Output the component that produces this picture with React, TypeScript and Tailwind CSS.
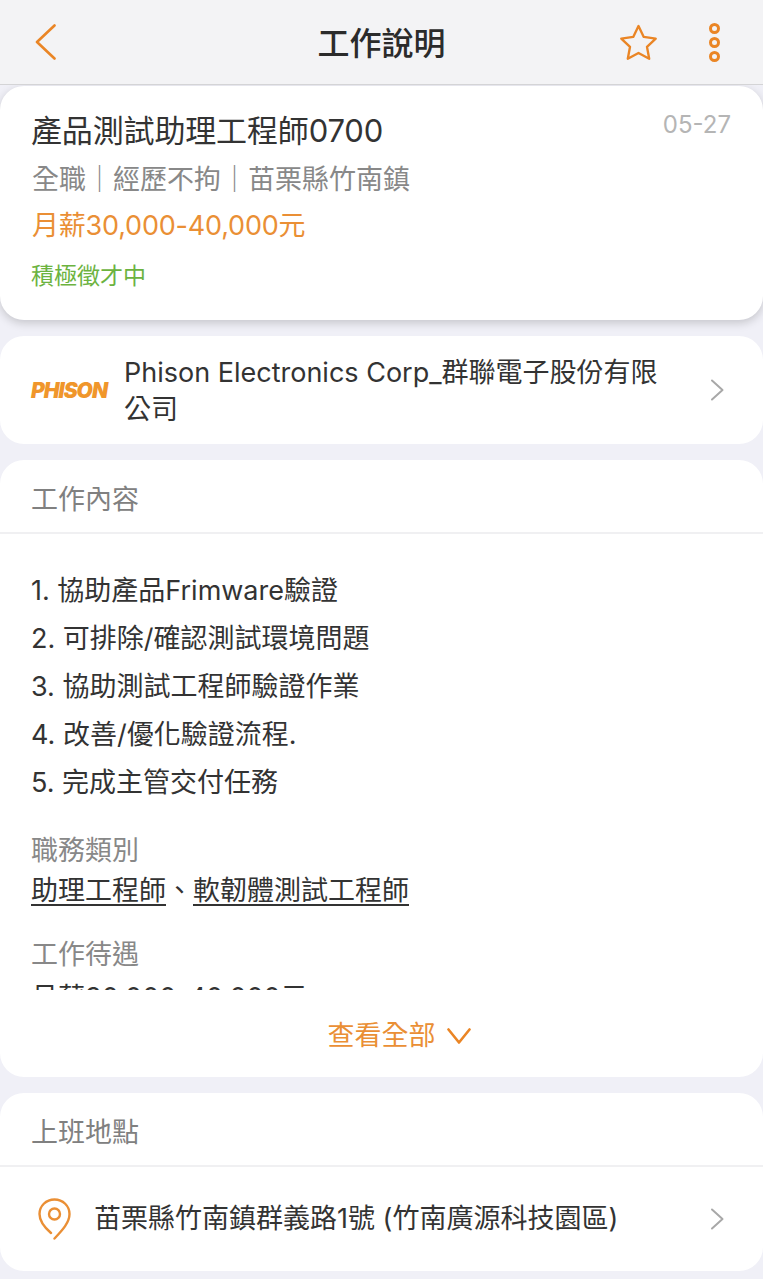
const duties = ['1. 協助產品Frimware驗證', '2. 可排除/確認測試環境問題', '3. 協助測試工程師驗證作業', '4. 改善/優化驗證流程.', '5. 完成主管交付任務']

const font = "font-['Inter','Noto_Sans_CJK_TC',sans-serif]"

function SectionTitle({ children }: { children: string }) {
  return <div className="flex h-[74px] items-center border-b-2 border-[#f0f0f2] px-[31px] pt-[6px] text-[27px] leading-none text-[#808080]">{children}</div>
}

function RowChevron() {
  return (
    <svg viewBox="0 0 14 22" className="h-[22px] w-[14px] shrink-0" fill="none" stroke="#a8a8a8" strokeWidth="2" strokeLinecap="round" strokeLinejoin="round">
      <path d="M2 1.500L12.500 11 2 20.500" />
    </svg>
  )
}

export default function App() {
  return (
    <div className={`${font} h-[1279px] w-[763px] overflow-hidden bg-[#f0f0f7] font-normal text-[#333]`}>
      <header className="relative z-10 flex h-[85px] items-center justify-between border-b border-[#d4d4d6] bg-[#f3f3f5] pl-[35px] pr-[43px]">
        <svg viewBox="0 0 21 36" className="h-[36px] w-[21px]" fill="none" stroke="#ea8525" strokeWidth="2.6" strokeLinecap="round" strokeLinejoin="round">
          <path d="M19.500 1.500L2 18l17.500 16.500" />
        </svg>
        <h1 className="absolute left-0 right-0 top-[28px] text-center text-[32px] font-medium leading-none text-[#2b2b2b]">工作說明</h1>
        <div className="flex items-center gap-[51px]">
          <svg viewBox="0 0 40 38" className="h-[37px] w-[39px]" fill="none" stroke="#ea8525" strokeWidth="2.4" strokeLinejoin="round">
            <path d="M20 2l5.400 11.300 12.300 1.700-9 8.400 2.300 12.300L20 29.800 9 35.700l2.300-12.300-9-8.400 12.300-1.700z" />
          </svg>
          <div className="flex flex-col gap-[3px]">
            <span className="h-[11px] w-[11px] rounded-full border-[3px] border-[#ea8525]" />
            <span className="h-[11px] w-[11px] rounded-full border-[3px] border-[#ea8525]" />
            <span className="h-[11px] w-[11px] rounded-full border-[3px] border-[#ea8525]" />
          </div>
        </div>
      </header>

      <section className="relative mt-px h-[234px] rounded-[24px] bg-white pl-[31px] pr-[32px] pt-[27px] shadow-[0_3px_10px_rgba(0,0,0,0.18)]">
        <div className="flex items-start justify-between">
          <div className="text-[31px] leading-[36px] tracking-[-0.15px] text-[#333]">產品測試助理工程師0700</div>
          <div className="text-[24px] leading-[24px] text-[#b5b5b5]">05-27</div>
        </div>
        <div className="ml-px mt-[15px] text-[27px] leading-[32px] text-[#888]">全職｜經歷不拘｜苗栗縣竹南鎮</div>
        <div className="ml-px mt-[14px] text-[27px] leading-[32px] tracking-[-0.2px] text-[#ea8f35]">月薪30,000-40,000元</div>
        <div className="mt-[20px] text-[23px] leading-[28px] text-[#6cb33f]">積極徵才中</div>
      </section>

      <section className="mt-4 flex h-[108px] items-center rounded-[24px] bg-white pl-[31px] pr-[39px]">
        <div className="w-[78px] shrink-0 text-[21px] font-black italic leading-none tracking-[-1px] text-[#f0962b]">PHISON</div>
        <div className="ml-[15px] w-[540px] pt-[2px] text-[27px] leading-[37px] text-[#333]">Phison Electronics Corp_群聯電子股份有限公司</div>
        <div className="flex-1" />
        <RowChevron />
      </section>

      <section className="mt-4 h-[617px] rounded-[24px] bg-white">
        <SectionTitle>工作內容</SectionTitle>
        <div className="h-[456px] overflow-hidden px-[31px] pt-[33px]">
          {duties.map((line) => (
            <div key={line} className="h-[48px] text-[27px] leading-[48px] text-[#333]">{line}</div>
          ))}
          <div className="mt-[26px] text-[27px] leading-[36px] text-[#888]">職務類別</div>
          <div className="text-[27px] leading-[44px] text-[#333]"><span className="underline underline-offset-4">助理工程師</span>、<span className="underline underline-offset-4">軟韌體測試工程師</span></div>
          <div className="mt-[24px] text-[27px] leading-[36px] text-[#888]">工作待遇</div>
          <div className="mt-[5px] text-[27px] leading-[40px] text-[#333]">月薪30,000-40,000元</div>
        </div>
        <div className="flex h-[87px] items-start justify-center gap-[11px] pl-[35px] pt-[28px] text-[27px] leading-[36px] text-[#ea8f35]">
          查看全部
          <svg viewBox="0 0 24 16" className="mt-[10px] h-[16px] w-[24px]" fill="none" stroke="#ea8525" strokeWidth="2.6" strokeLinecap="round" strokeLinejoin="round">
            <path d="M1.500 1.500L12 14.500 22.500 1.500" />
          </svg>
        </div>
      </section>

      <section className="mt-4 h-[178px] rounded-[24px] bg-white">
        <SectionTitle>上班地點</SectionTitle>
        <div className="flex h-[104px] items-center pl-[38px] pr-[39px]">
          <svg viewBox="0 0 33 42" className="h-[42px] w-[33px] shrink-0" fill="none" stroke="#ea8f35" strokeWidth="2.4" strokeLinecap="round" strokeLinejoin="round">
            <path d="M13 35C6 29 1.500 23 1.500 16 1.500 8 8 1.500 16.500 1.500S31.500 8 31.500 16c0 9-8 17-15 24.500" />
            <circle cx="16.500" cy="16" r="5.500" />
          </svg>
          <div className="ml-[23px] flex-1 text-[27px] leading-[36px] text-[#333]">苗栗縣竹南鎮群義路1號 (竹南廣源科技園區)</div>
          <RowChevron />
        </div>
      </section>
    </div>
  )
}
